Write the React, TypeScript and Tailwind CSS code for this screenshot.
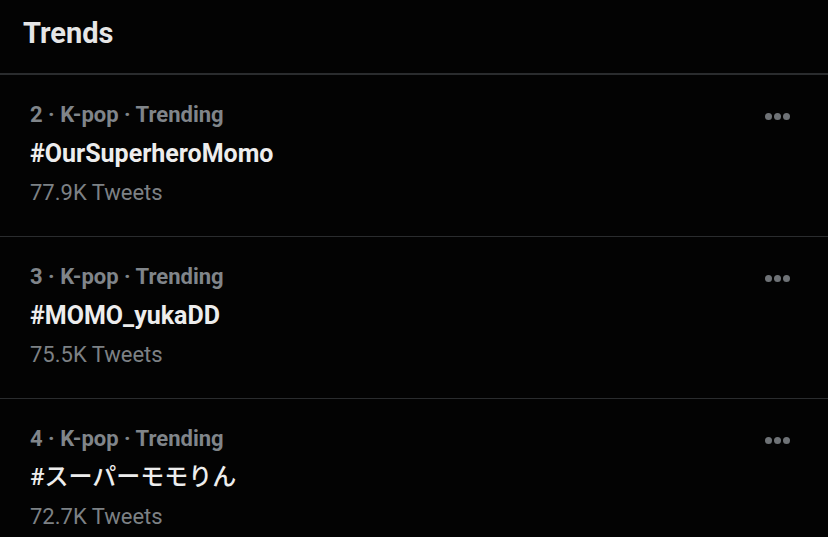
import React from "react";

const trends = [
  { rank: 2, title: "#OurSuperheroMomo", count: "77.9K Tweets", jp: false },
  { rank: 3, title: "#MOMO_yukaDD", count: "75.5K Tweets", jp: false },
  { rank: 4, title: "#スーパーモモりん", count: "72.7K Tweets", jp: true },
];

function Dots() {
  return (
    <div className="self-start flex items-center gap-[2px] pt-[18px]">
      <span className="block w-[7px] h-[7px] rounded-full bg-[#6e7276]" />
      <span className="block w-[7px] h-[7px] rounded-full bg-[#6e7276]" />
      <span className="block w-[7px] h-[7px] rounded-full bg-[#6e7276]" />
    </div>
  );
}

export default function App() {
  return (
    <div
      className="w-[828px] h-[537px] overflow-hidden bg-[#030303]"
      style={{ fontFamily: 'Roboto, "Noto Sans CJK JP", sans-serif' }}
    >
      <div className="h-[75px] border-b-2 border-[#2a2c2e] pl-[23px] pt-[13px]">
        <h1 className="text-[29px] leading-[40px] font-bold text-[#e6e6e6]">Trends</h1>
      </div>
      {trends.map((t) => (
        <div
          key={t.rank}
          className="h-[162px] border-b border-[#2a2c2e] pl-[30px] pr-[38px] pt-[20px] flex justify-between"
        >
          <div className="flex flex-col">
            <div className="text-[22px] leading-[39px] font-bold text-[#80858a]">
              {t.rank} · K-pop · Trending
            </div>
            <div
              className={
                t.jp
                  ? "text-[24px] leading-[39px] font-medium text-[#ededed]"
                  : "text-[25px] leading-[39px] font-bold text-[#ededed]"
              }
            >
              {t.title}
            </div>
            <div className="text-[22px] leading-[39px] text-[#7d8185]">{t.count}</div>
          </div>
          <Dots />
        </div>
      ))}
    </div>
  );
}
